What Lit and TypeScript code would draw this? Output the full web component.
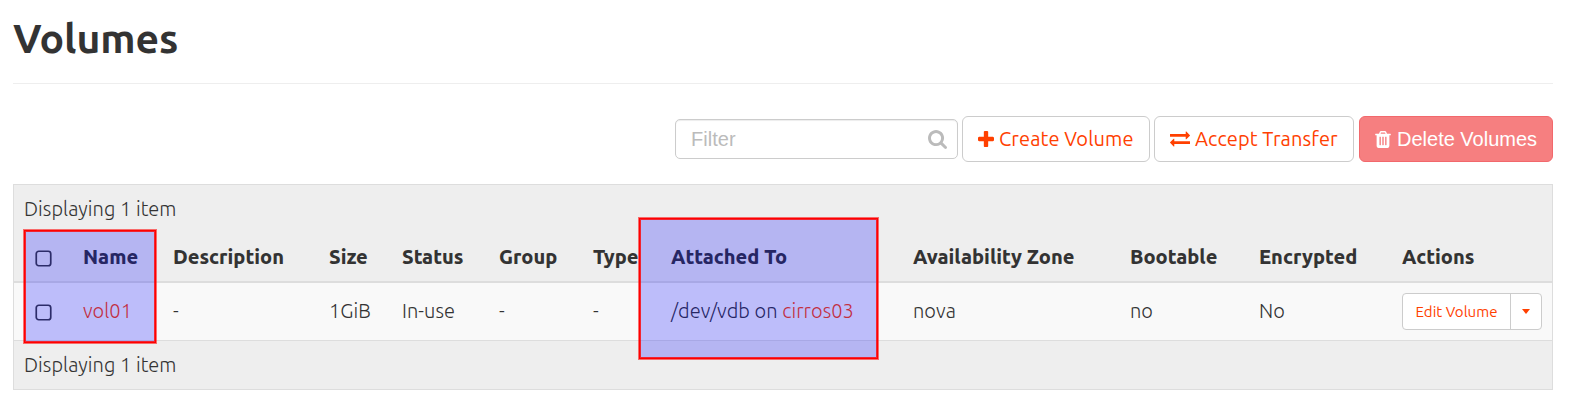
import { LitElement, html, css, svg } from "lit";
import { customElement } from "lit/decorators.js";

const icon = (w: number, h: number, box: string, d: string) =>
  html`<svg width=${w} height=${h} viewBox=${box} fill="currentColor">${svg`<path fill-rule="evenodd" d=${d} />`}</svg>`;

const PLUS = "M1408 608v192q0 40-28 68t-68 28H896v416q0 40-28 68t-68 28H608q-40 0-68-28t-28-68V896H96q-40 0-68-28T0 800V608q0-40 28-68t68-28h416V96q0-40 28-68t68-28h192q40 0 68 28t28 68v416h416q40 0 68 28t28 68z";
const SEARCH = "M1152 704q0-185-131.500-316.500T704 256 387.500 387.500 256 704t131.500 316.500T704 1152t316.500-131.500T1152 704zm512 832q0 52-38 90t-90 38q-54 0-90-38l-343-342q-179 124-399 124-143 0-273.500-55.500t-225-150-150-225T0 704t55.500-273.500 150-225 225-150T704 0t273.500 55.500 225 150 150 225T1408 704q0 220-124 399l343 343q37 37 37 90z";
const EXCHANGE = "M1792 1184v192q0 13-9.500 22.500t-22.500 9.500H384v192q0 13-9.500 22.500T352 1632q-12 0-24-10L9 1302q-9-9-9-22 0-14 9-23l320-320q9-9 23-9 13 0 22.500 9.500t9.500 22.500v192h1376q13 0 22.500 9.500t9.500 22.500zm0-544q0 14-9 23l-320 320q-9 9-23 9-13 0-22.500-9.500T1408 960V768H32q-13 0-22.500-9.500T0 736V544q0-13 9.500-22.500T32 512h1376V320q0-14 9-23t23-9q12 0 24 10l319 319q9 9 9 23z";
const TRASH = "M512 1376V672q0-14-9-23t-23-9h-64q-14 0-23 9t-9 23v704q0 14 9 23t23 9h64q14 0 23-9t9-23zm256 0V672q0-14-9-23t-23-9h-64q-14 0-23 9t-9 23v704q0 14 9 23t23 9h64q14 0 23-9t9-23zm256 0V672q0-14-9-23t-23-9h-64q-14 0-23 9t-9 23v704q0 14 9 23t23 9h64q14 0 23-9t9-23zM480 384h448l-48-117q-7-9-17-11H546q-10 2-17 11zm928 32v64q0 14-9 23t-23 9h-96v948q0 83-47 143.500t-113 60.500H288q-66 0-113-58.500T128 1464V512H32q-14 0-23-9t-9-23v-64q0-14 9-23t23-9h309l70-167q15-37 54-63t79-26h320q40 0 79 26t54 63l70 167h309q14 0 23 9t9 23z";

interface Column { head: string; cell?: string; link?: string; }

const COLUMNS: Column[] = [
  { head: "Name", link: "vol01" },
  { head: "Description", cell: "-" },
  { head: "Size", cell: "1GiB" },
  { head: "Status", cell: "In-use" },
  { head: "Group", cell: "-" },
  { head: "Type", cell: "-" },
  { head: "Attached To", cell: "/dev/vdb on ", link: "cirros03" },
  { head: "Availability Zone", cell: "nova" },
  { head: "Bootable", cell: "no" },
  { head: "Encrypted", cell: "No" },
];

const checkbox = () =>
  html`<svg class="check" width="17" height="17" viewBox="0 0 17 17"><rect x="1.250" y="1.250" width="14.500" height="14.500" rx="2.500" fill="none" stroke="#3a3a3a" stroke-width="1.700" /></svg>`;

@customElement("app-root")
class AppRoot extends LitElement {
  static styles = css`
    :host {
      display: block; position: relative; box-sizing: border-box; height: 403px;
      padding: 0 18px 0 13px; overflow: hidden; background: #fff; color: #333;
      font: 300 20px/28px Ubuntu, "Noto Sans", sans-serif; letter-spacing: .05px;
    }
    * { box-sizing: border-box; }
    svg { display: block; flex: none; }
    h1 {
      margin: 0; height: 84px; padding-top: 10px; border-bottom: 1px solid #eee;
      font-size: 41px; line-height: 56px; font-weight: 580; letter-spacing: -.12px;
    }
    .toolbar { display: flex; justify-content: flex-end; align-items: center; height: 46px; margin-top: 32px; }
    .filter {
      display: flex; align-items: center; justify-content: space-between;
      width: 283px; height: 40px; margin-right: 4px; padding: 0 10px 0 15px;
      border: 1px solid #ccc; border-radius: 5px; color: #bbb;
      box-shadow: inset 0 1px 1px rgba(0, 0, 0, .075);
      font-family: "Liberation Sans", Arial, sans-serif; font-size: 20px; font-weight: 400;
    }
    .btn {
      display: flex; align-items: center; height: 46px; padding-left: 15px; white-space: nowrap;
      background: #fff; border: 1px solid #ccc; border-radius: 6px; color: #ff4000; font-weight: 400;
      letter-spacing: .1px;
    }
    .create { width: 188px; margin-right: 4px; gap: 5px; }
    .accept { width: 200px; margin-right: 5px; gap: 5px; }
    .delete {
      width: 194px; padding-left: 15px; gap: 6px; background: #f67f80; border-color: #f2686c; color: #fff;
      font-family: "Liberation Sans", Arial, sans-serif; font-size: 20px; letter-spacing: 0;
    }
    .table { margin-top: 22px; height: 206px; border: 1px solid #ddd; background: #eee; }
    .caption { height: 48px; padding: 10px 0 0 10px; }
    .row {
      display: grid; align-items: center; padding-left: 21px;
      grid-template-columns: 48px 90px 156px 73px 97px 94px 78px 242px 217px 129px 143px 1fr;
    }
    .head { height: 50px; border-bottom: 2px solid #ddd; font-weight: 800; letter-spacing: 0; }
    .body { height: 58px; border-bottom: 1px solid #ddd; background: #f9f9f9; }
    .cell { padding-bottom: 2px; }
    .foot { padding: 10px 0 0 10px; }
    .check { margin-top: 3px; }
    .body .check { margin-top: 2px; }
    a { color: #ff4000; }
    .group {
      display: flex; align-items: center; width: 140px; height: 37px; background: #fff;
      border: 1px solid #ccc; border-radius: 4px; color: #ff4000; font-size: 15px; font-weight: 400;
    }
    .edit { width: 108px; height: 35px; padding: 4px 0 0 12.500px; border-right: 1px solid #ccc; letter-spacing: .05px; }
    .caret { margin-left: 11px; border: 4.500px solid transparent; border-top: 5px solid #ff4000; border-bottom: 0; }
    .mark {
      position: absolute; border: 1px solid #f00; background: rgba(0, 0, 255, .24); background-clip: padding-box;
      box-shadow: 0 0 0 1px rgba(255, 0, 0, .55), inset 0 0 0 1px rgba(255, 0, 0, .8);
    }
    .mark-name { left: 24px; top: 230px; width: 132px; height: 113px; }
    .mark-attached { left: 639px; top: 218px; width: 239px; height: 141px; }
  `;
  render() {
    return html`
      <h1>Volumes</h1>
      <div class="toolbar">
        <div class="filter"><span>Filter</span>${icon(19, 19, "0 0 1664 1664", SEARCH)}</div>
        <div class="btn create">${icon(16, 16, "0 0 1408 1408", PLUS)}<span>Create Volume</span></div>
        <div class="btn accept">${icon(20, 16, "0 250 1792 1420", EXCHANGE)}<span>Accept Transfer</span></div>
        <div class="btn delete">${icon(16, 17, "0 128 1408 1536", TRASH)}<span>Delete Volumes</span></div>
      </div>
      <div class="table">
        <div class="caption">Displaying 1 item</div>
        <div class="row head">
          ${checkbox()}
          ${COLUMNS.map((c) => html`<div>${c.head}</div>`)}
          <div>Actions</div>
        </div>
        <div class="row body">
          ${checkbox()}
          ${COLUMNS.map((c) => html`<div class="cell">${c.cell ?? ""}${c.link ? html`<a>${c.link}</a>` : ""}</div>`)}
          <div class="group"><div class="edit">Edit Volume</div><div class="caret"></div></div>
        </div>
        <div class="foot">Displaying 1 item</div>
      </div>
      <div class="mark mark-name"></div>
      <div class="mark mark-attached"></div>
    `;
  }
}
